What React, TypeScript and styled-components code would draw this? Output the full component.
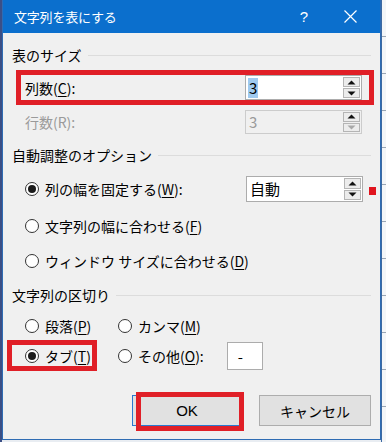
import React from 'react'
import styled, { createGlobalStyle } from 'styled-components'

const Global = createGlobalStyle`
  html, body {
    margin: 0;
    padding: 0;
    background: #e9edf2;
  }
  body {
    font-family: "Noto Sans CJK JP", "Noto Sans", "Liberation Sans", sans-serif;
    font-size: 14px;
    color: #000;
  }
  u {
    text-underline-offset: 2px;
    text-decoration-thickness: 1px;
  }
`

const Page = styled.div`
  display: flex;
  width: 386px;
  height: 442px;
  overflow: hidden;
`

const LeftEdge = styled.div`
  width: 2px;
  background: #3b4f86;
`

const RightEdge = styled.div`
  flex: 1;
  background: repeating-linear-gradient(
    to bottom,
    #f4f6f8 0px,
    #f4f6f8 36px,
    #9aa6b4 36px,
    #9aa6b4 37px
  );
  border-left: 1px solid #3d6aa3;
`

const Dialog = styled.div`
  width: 379px;
  height: 440px;
  box-sizing: border-box;
  border: 1px solid #2f6cb3;
  border-top: none;
  background: #f0f0f0;
  display: flex;
  flex-direction: column;
`

const TitleBar = styled.div`
  height: 33px;
  flex: none;
  background: #0b6fcd;
  color: #fff;
  display: flex;
  align-items: center;
  padding-left: 11px;
  font-size: 13px;
`

const Title = styled.div`
  flex: 1;
  letter-spacing: -0.2px;
`

const CaptionButton = styled.div`
  width: 46px;
  height: 33px;
  display: flex;
  align-items: center;
  justify-content: center;
  font-family: "Liberation Sans", sans-serif;
  font-size: 15px;
`

const Body = styled.div`
  display: flex;
  flex-direction: column;
  padding: 0 9px;
`

const Heading = styled.div<{ $mt: number }>`
  margin-top: ${(p) => p.$mt}px;
  height: 20px;
  display: flex;
  align-items: center;
  gap: 6px;
  &::after {
    content: '';
    flex: 1;
    height: 1px;
    background: #dcdcdc;
    margin-top: 1px;
  }
`

const Row = styled.div<{ $mt: number; $h?: number }>`
  position: relative;
  margin-top: ${(p) => p.$mt}px;
  height: ${(p) => p.$h ?? 25}px;
  display: flex;
  align-items: center;
  padding: 0 9px 0 13px;
`

const Label = styled.span<{ $disabled?: boolean }>`
  color: ${(p) => (p.$disabled ? '#9a9a9a' : '#000')};
  white-space: nowrap;
`

const Spacer = styled.div`
  flex: 1;
`

const Spin = styled.div<{ $disabled?: boolean }>`
  width: 117px;
  height: 100%;
  box-sizing: border-box;
  border: 1px solid ${(p) => (p.$disabled ? '#cccccc' : '#acacac')};
  background: ${(p) => (p.$disabled ? '#f0f0f0' : '#fff')};
  display: flex;
  align-items: center;
  padding: 1px 1px 1px 2px;
`

const SpinText = styled.span<{ $disabled?: boolean; $selected?: boolean }>`
  flex: 1;
  display: flex;
  align-items: center;
  font-size: 15px;
  color: ${(p) => (p.$disabled ? '#9a9a9a' : '#000')};
  & > span {
    background: ${(p) => (p.$selected ? '#9fcaf0' : 'transparent')};
    padding: 0 1px;
    line-height: 20px;
  }
`

const Arrows = styled.div`
  width: 17px;
  height: 100%;
  display: flex;
  flex-direction: column;
  gap: 1px;
`

const ArrowBtn = styled.div<{ $disabled?: boolean }>`
  flex: 1;
  box-sizing: border-box;
  border: 1px solid #b5b5b5;
  background: #ececec;
  display: flex;
  align-items: center;
  justify-content: center;
  color: ${(p) => (p.$disabled ? '#a8a8a8' : '#111')};
`

const Highlight = styled.div<{ $l: number; $r: number; $t: number; $b: number }>`
  position: absolute;
  left: ${(p) => p.$l}px;
  right: ${(p) => p.$r}px;
  top: ${(p) => p.$t}px;
  bottom: ${(p) => p.$b}px;
  border: 5px solid #e01f27;
  pointer-events: none;
`

const RadioItem = styled.div<{ $w?: number }>`
  display: flex;
  align-items: center;
  gap: 6px;
  width: ${(p) => (p.$w ? `${p.$w}px` : 'auto')};
  flex: none;
`

const RadioCircle = styled.span<{ $checked?: boolean }>`
  width: 14px;
  height: 14px;
  box-sizing: border-box;
  border-radius: 50%;
  border: 1px solid #333;
  background: #fff;
  display: flex;
  align-items: center;
  justify-content: center;
  &::after {
    content: '';
    width: 8px;
    height: 8px;
    border-radius: 50%;
    background: ${(p) => (p.$checked ? '#1b1b1b' : 'transparent')};
  }
`

const Marker = styled.div`
  width: 7px;
  height: 8px;
  background: #e0141e;
  margin-left: 6px;
  margin-right: -14px;
  margin-top: 4px;
`

const SmallBox = styled.div`
  width: 36px;
  height: 28px;
  box-sizing: border-box;
  border: 1px solid #acacac;
  background: #fff;
  margin-left: 23px;
  padding: 0 0 0 10px;
  display: flex;
  align-items: center;
  font-size: 15px;
`

const ButtonRow = styled.div`
  margin-top: 25px;
  height: 31px;
  display: flex;
  justify-content: flex-end;
  gap: 17px;
`

const Button = styled.div<{ $focused?: boolean; $w: number }>`
  position: relative;
  width: ${(p) => p.$w}px;
  height: 31px;
  box-sizing: border-box;
  border: 1px solid ${(p) => (p.$focused ? '#2a79cf' : '#adadad')};
  background: #e1e1e1;
  display: flex;
  align-items: center;
  justify-content: center;
  font-size: 14px;
`

const LatinText = styled.span`
  font-family: "Liberation Sans", sans-serif;
  font-size: 15px;
`

function Up({ color }: { color?: string }) {
  return (
    <svg width="9" height="5" viewBox="0 0 9 5">
      <polygon points="0.5,4.5 4.5,0.5 8.5,4.5" fill={color ?? 'currentColor'} />
    </svg>
  )
}

function Down() {
  return (
    <svg width="9" height="5" viewBox="0 0 9 5">
      <polygon points="0.5,0.5 8.5,0.5 4.5,4.5" fill="currentColor" />
    </svg>
  )
}

function SpinBox({ value, disabled, selected }: { value: string; disabled?: boolean; selected?: boolean }) {
  return (
    <Spin $disabled={disabled}>
      <SpinText $disabled={disabled} $selected={selected}>
        <span>{value}</span>
      </SpinText>
      <Arrows>
        <ArrowBtn>
          <Up color="#111" />
        </ArrowBtn>
        <ArrowBtn $disabled={disabled}>
          <Down />
        </ArrowBtn>
      </Arrows>
    </Spin>
  )
}

function Radio({ checked, children, w }: { checked?: boolean; children: React.ReactNode; w?: number }) {
  return (
    <RadioItem $w={w}>
      <RadioCircle $checked={checked} />
      <Label>{children}</Label>
    </RadioItem>
  )
}

export default function App() {
  return (
    <Page>
      <Global />
      <LeftEdge />
      <Dialog>
        <TitleBar>
          <Title>文字列を表にする</Title>
          <CaptionButton>?</CaptionButton>
          <CaptionButton>
            <svg width="13" height="13" viewBox="0 0 13 13">
              <path d="M0.5 0.5 L12.5 12.5 M12.5 0.5 L0.5 12.5" stroke="#fff" strokeWidth="1.2" />
            </svg>
          </CaptionButton>
          <div style={{ width: 7 }} />
        </TitleBar>
        <Body>
          <Heading $mt={12}>表のサイズ</Heading>
          <Row $mt={10}>
            <Label>
              列数(<u>C</u>):
            </Label>
            <Spacer />
            <SpinBox value="3" selected />
            <Highlight $l={4} $r={-3} $t={-5} $b={-5} />
          </Row>
          <Row $mt={10} $h={24}>
            <Label $disabled>行数(R):</Label>
            <Spacer />
            <SpinBox value="3" disabled />
          </Row>
          <Heading $mt={11}>自動調整のオプション</Heading>
          <Row $mt={11} $h={26}>
            <Radio checked>
              列の幅を固定する(<u>W</u>):
            </Radio>
            <Spacer />
            <SpinBox value="自動" />
            <Marker />
          </Row>
          <Row $mt={11} $h={26}>
            <Radio>
              文字列の幅に合わせる(<u>F</u>)
            </Radio>
          </Row>
          <Row $mt={9} $h={26}>
            <Radio>
              ウィンドウ サイズに合わせる(<u>D</u>)
            </Radio>
          </Row>
          <Heading $mt={11}>文字列の区切り</Heading>
          <Row $mt={8} $h={26}>
            <Radio w={93}>
              段落(<u>P</u>)
            </Radio>
            <Radio>
              カンマ(<u>M</u>)
            </Radio>
          </Row>
          <Row $mt={3} $h={28}>
            <Radio checked w={93}>
              タブ(<u>T</u>)
            </Radio>
            <Radio>
              その他(<u>O</u>):
            </Radio>
            <SmallBox>-</SmallBox>
            <Highlight $l={-5} $r={274} $t={-2} $b={-1} />
          </Row>
          <ButtonRow>
            <Button $focused $w={110}>
              <LatinText>OK</LatinText>
              <Highlight $l={3} $r={-3} $t={-4} $b={-6} />
            </Button>
            <Button $w={112}>キャンセル</Button>
          </ButtonRow>
        </Body>
      </Dialog>
      <RightEdge />
    </Page>
  )
}
